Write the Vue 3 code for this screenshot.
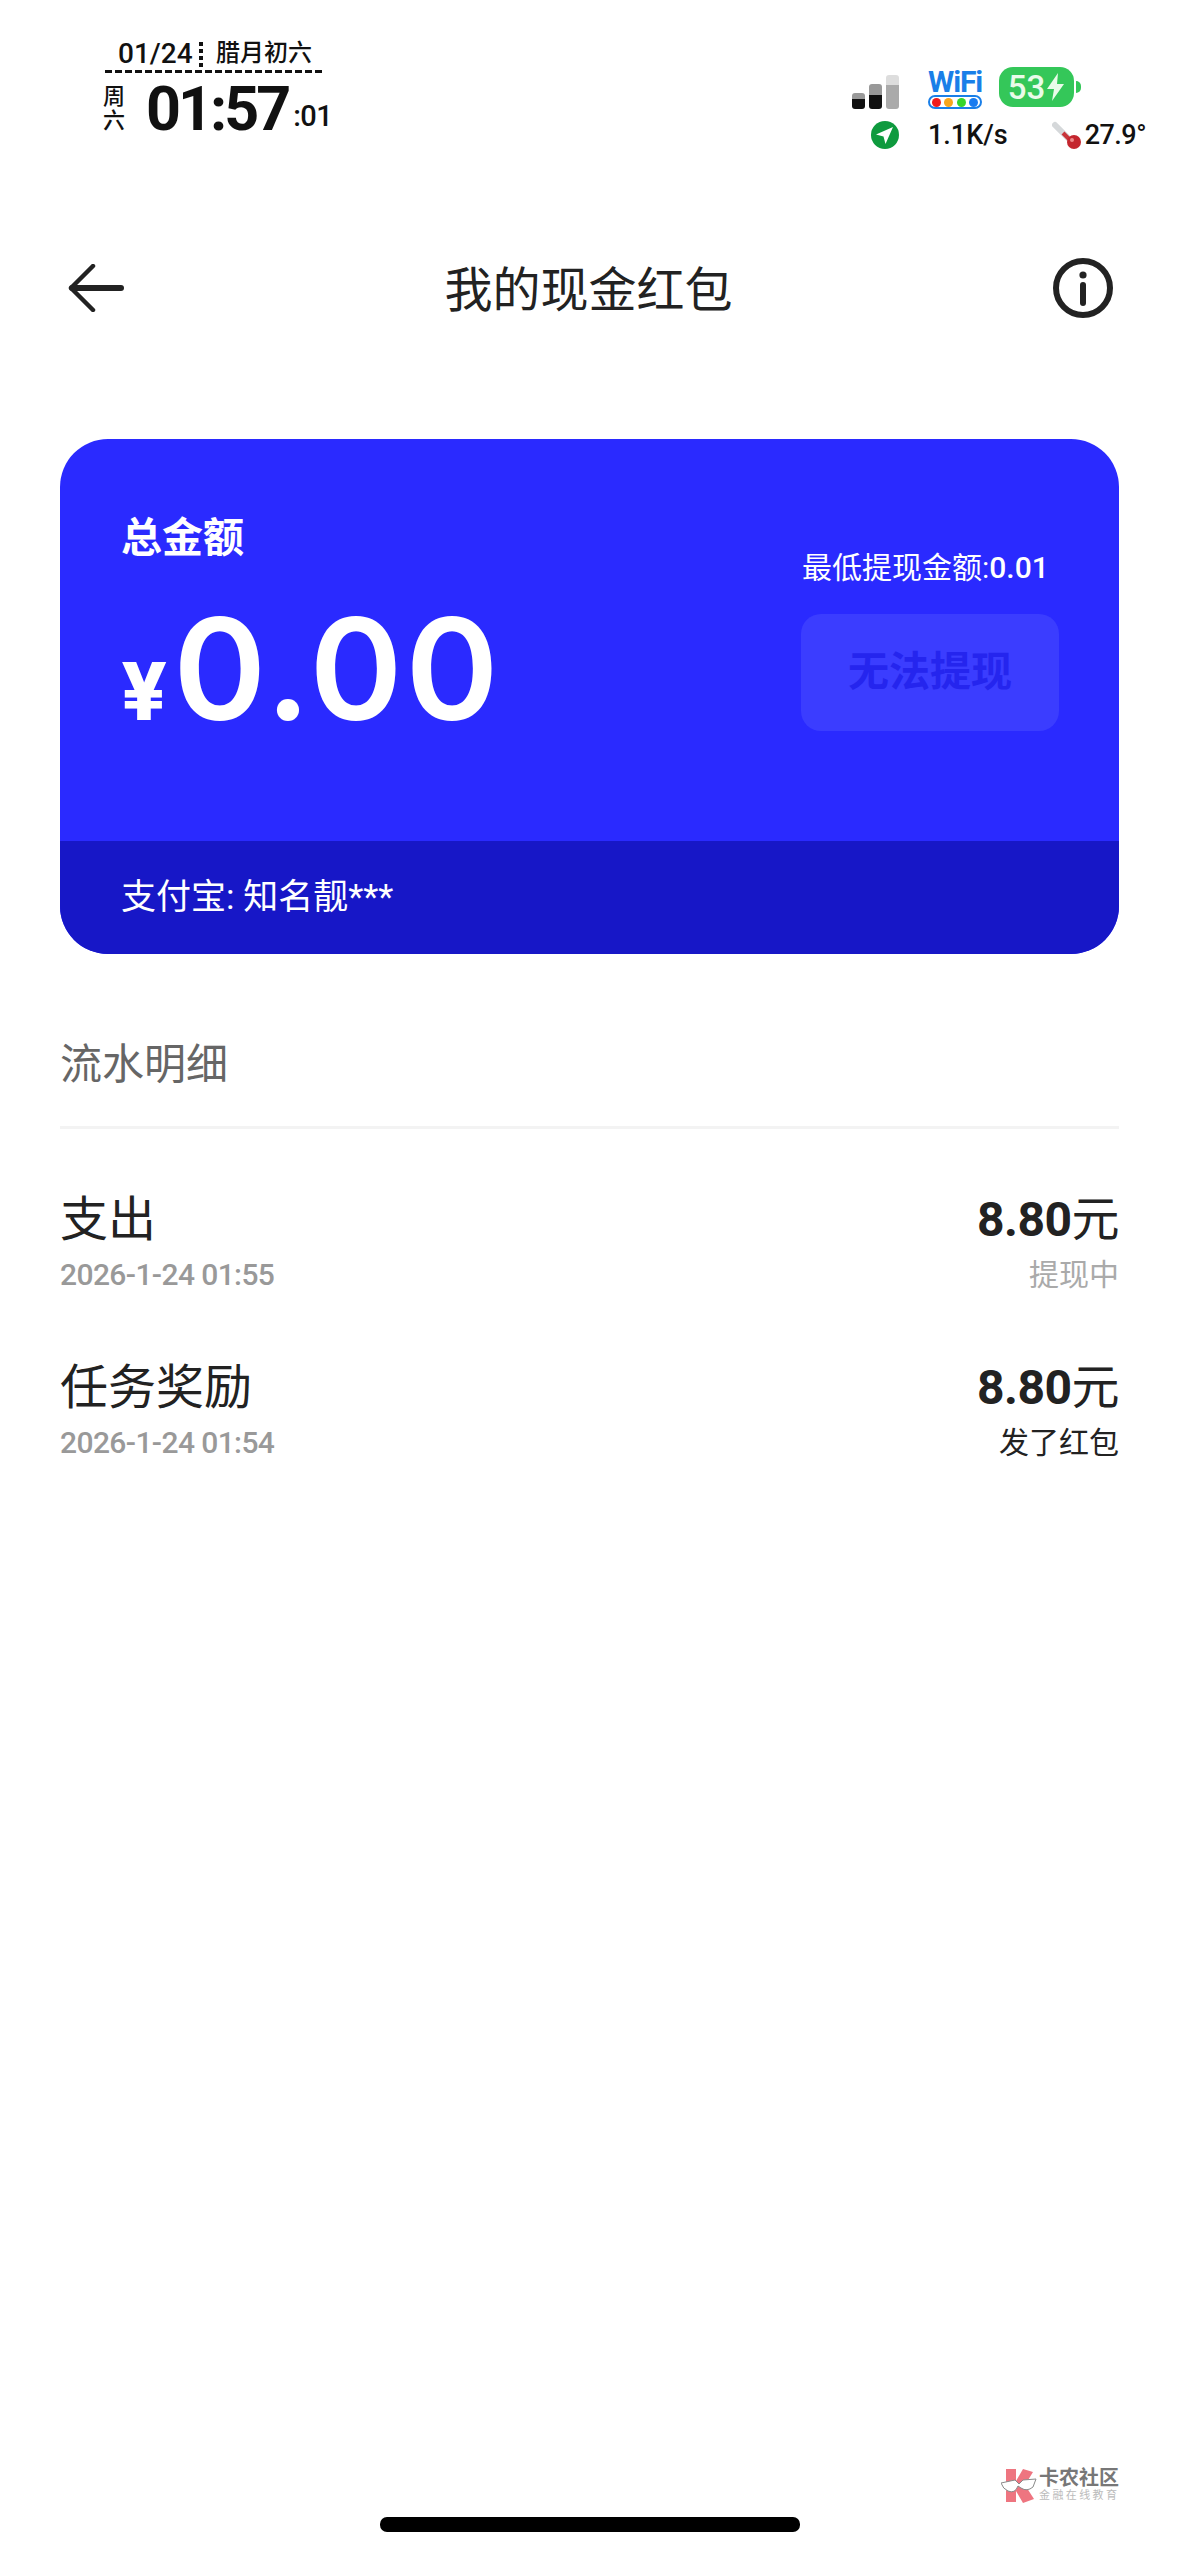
<template>
  <div class="page">
    <!-- Status bar -->
    <div class="status">
      <div class="clock">
        <div class="clock-top">
          <span class="clock-date">01/24</span>
          <span class="dots-v short"></span>
          <span class="clock-lunar">腊月初六</span>
        </div>
        <div class="clock-dash"></div>
        <div class="clock-main">
          <div class="clock-week"><span>周</span><span>六</span></div>
          <span class="dots-v tall"></span>
          <span class="clock-time">01:57</span>
          <span class="clock-sec">:01</span>
        </div>
      </div>

      <div class="indicators">
        <div class="ind-top">
          <div class="signal">
            <div class="bar b1"></div>
            <div class="bar b2"></div>
            <div class="bar b3"></div>
          </div>
          <div class="wifi">
            <span class="wifi-text">WiFi</span>
            <div class="wifi-pill">
              <i style="background: #f01c1c"></i>
              <i style="background: #f9a61c"></i>
              <i style="background: #35d52c"></i>
              <i style="background: #1a7cf0"></i>
            </div>
          </div>
          <div class="battery">
            <div class="battery-body">
              <span>53</span>
              <svg width="19" height="28" viewBox="0 0 19 28">
                <path d="M12 0 L1 16 H8 L6 28 L18 11 H11 Z" fill="#e9fbe9" />
              </svg>
            </div>
            <div class="battery-nub"></div>
          </div>
        </div>
        <div class="ind-bottom">
          <svg class="nav-icon" width="28" height="28" viewBox="0 0 28 28">
            <circle cx="14" cy="14" r="14" fill="#0e9a3e" />
            <path d="M22 6 L5 13.5 L12.5 15.5 L14.5 23 Z" fill="#fff" />
          </svg>
          <span class="speed">1.1K/s</span>
          <svg class="thermo" width="30" height="30" viewBox="0 0 30 30">
            <path d="M3 5 L17 19" stroke="#d5d8da" stroke-width="6" stroke-linecap="round" />
            <path d="M11 13 L19 21" stroke="#c8343a" stroke-width="4" />
            <circle cx="22" cy="22" r="7" fill="#c4262e" />
            <circle cx="20" cy="20" r="2" fill="#ee8a8a" />
          </svg>
          <span class="temp">27.9°</span>
        </div>
      </div>
    </div>

    <!-- Header -->
    <div class="nav">
      <svg width="56" height="48" viewBox="0 0 56 48" fill="none" stroke="#222" stroke-linecap="round" stroke-linejoin="round">
        <path d="M25 2 L3 24 L25 46" stroke-width="4.5" />
        <path d="M4 24 H53" stroke-width="6" />
      </svg>
      <span class="nav-title">我的现金红包</span>
      <svg width="60" height="60" viewBox="0 0 60 60" fill="none" stroke="#222">
        <circle cx="30" cy="30" r="27" stroke-width="6" />
        <circle cx="30" cy="17" r="3.6" fill="#222" stroke="none" />
        <path d="M30 27 V45" stroke-width="6" stroke-linecap="round" />
      </svg>
    </div>

    <!-- Balance card -->
    <div class="card">
      <div class="card-body">
        <div class="balance">
          <div class="balance-label">总金额</div>
          <div class="balance-amount">
            <span class="yen">¥</span><span class="amount">0.00</span>
          </div>
        </div>
        <div class="withdraw">
          <div class="withdraw-min">最低提现金额:<span>0.01</span></div>
          <div class="withdraw-btn">无法提现</div>
        </div>
      </div>
      <div class="card-foot">支付宝: 知名靓***</div>
    </div>

    <!-- Records -->
    <div class="section-title">流水明细</div>
    <div class="records">
      <div v-for="item in records" :key="item.time" class="record">
        <div class="record-left">
          <div class="record-name">{{ item.name }}</div>
          <div class="record-time">{{ item.time }}</div>
        </div>
        <div class="record-right">
          <div class="record-money">{{ item.money }}<span>元</span></div>
          <div class="record-state" :class="{ muted: item.muted }">{{ item.state }}</div>
        </div>
      </div>
    </div>

    <!-- Watermark -->
    <div class="watermark">
      <svg width="36" height="36" viewBox="0 0 36 36">
        <path d="M5 1 H15 V13 L22 1 L32 4 L24 17 L33 31 L22 35 L15 23 V34 H5 Z" fill="#ee7580" />
        <path d="M0 15 L14 12 L18 16 L22 12 L35 11 L32 19 Q26 24 20 20 L17 18 Q14 26 7 23 Q2 21 0 15 Z" fill="#fff" stroke="#8a8a8a" stroke-width="1" />
      </svg>
      <div class="wm-text">
        <div class="wm-main">卡农社区</div>
        <div class="wm-sub">金融在线教育</div>
      </div>
    </div>

    <div class="home-bar"></div>
  </div>
</template>

<script setup>
import { ref } from 'vue';

const records = ref([
  { name: '支出', time: '2026-1-24 01:55', money: '8.80', state: '提现中', muted: true },
  { name: '任务奖励', time: '2026-1-24 01:54', money: '8.80', state: '发了红包', muted: false },
]);
</script>

<style>
html,
body {
  margin: 0;
  background: #fff;
}
</style>

<style scoped>
.page {
  position: relative;
  width: 1179px;
  height: 2556px;
  overflow: hidden;
  background: #fff;
  color: #222;
  font-family: Roboto, "Noto Sans CJK SC", sans-serif;
}

/* status bar */
.status {
  display: flex;
  justify-content: space-between;
  height: 230px;
  box-sizing: border-box;
  padding: 38px 33px 0 103px;
  color: #111;
}

.clock {
  width: 222px;
}

.clock-top {
  display: flex;
  align-items: center;
  height: 32px;
  padding-left: 15px;
}

.clock-date {
  width: 81px;
  font-size: 28px;
  font-weight: 500;
  line-height: 32px;
}

.clock-lunar {
  margin-left: 13px;
  font-size: 24px;
  font-weight: 500;
  line-height: 30px;
  margin-bottom: 2px;
}

.dots-v {
  display: block;
  width: 4px;
  background: repeating-linear-gradient(to bottom, #111 0, #111 4px, transparent 4px, transparent 7px);
}

.dots-v.short {
  height: 25px;
}

.dots-v.tall {
  height: 49px;
  margin: 0 8px 0 13px;
}

.clock-dash {
  height: 3px;
  margin: 0 0 11px 2px;
  background: repeating-linear-gradient(to right, #111 0, #111 7px, transparent 7px, transparent 10px);
}

.clock-main {
  display: flex;
  align-items: center;
  height: 50px;
}

.clock-week {
  display: flex;
  flex-direction: column;
  width: 22px;
  font-size: 22px;
  line-height: 24px;
  font-weight: 500;
}

.clock-time {
  font-size: 61px;
  font-weight: 700;
  line-height: 50px;
  letter-spacing: -3px;
}

.clock-sec {
  align-self: flex-end;
  margin-left: 5px;
  font-size: 29px;
  font-weight: 500;
  line-height: 36px;
  letter-spacing: -0.5px;
}

.indicators {
  display: flex;
  flex-direction: column;
  width: 294px;
  padding-top: 29px;
}

.ind-top {
  display: flex;
  height: 42px;
  align-items: flex-end;
}

.signal {
  display: flex;
  align-items: flex-end;
  gap: 4px;
  width: 47px;
}

.bar {
  width: 13px;
  border-radius: 3px;
}

.b1 {
  height: 16px;
  background: linear-gradient(to bottom, #999 0, #999 6px, #111 6px);
}

.b2 {
  height: 25px;
  background: linear-gradient(to bottom, #999 0, #999 11px, #111 11px);
}

.b3 {
  height: 34px;
  background: linear-gradient(to bottom, #ddd 0, #ddd 10px, #aaa 10px);
}

.wifi {
  display: flex;
  flex-direction: column;
  width: 54px;
  margin-left: 29px;
}

.wifi-text {
  height: 26px;
  color: #1a7fe8;
  font-size: 30px;
  font-weight: 700;
  line-height: 26px;
  letter-spacing: -1.2px;
  text-align: center;
  white-space: nowrap;
}

.wifi-pill {
  display: flex;
  align-items: center;
  justify-content: space-between;
  box-sizing: border-box;
  height: 14px;
  padding: 0 2px;
  border: 2px solid #1a7fe8;
  border-radius: 7px;
}

.wifi-pill i {
  display: block;
  width: 9px;
  height: 9px;
  border-radius: 50%;
}

.battery {
  display: flex;
  align-items: center;
  margin-left: 17px;
  margin-bottom: 2px;
}

.battery-body {
  display: flex;
  align-items: center;
  justify-content: center;
  gap: 1px;
  width: 75px;
  height: 40px;
  border-radius: 14px;
  background: #34c759;
  color: #e9fbe9;
  font-size: 33px;
  font-weight: 500;
}

.battery-nub {
  width: 5px;
  height: 12px;
  margin-left: 2px;
  border-radius: 0 5px 5px 0;
  background: #34c759;
}

.ind-bottom {
  display: flex;
  align-items: center;
  height: 30px;
  margin-top: 11px;
  padding-left: 19px;
}

.speed {
  width: 129px;
  margin-left: 29px;
  font-size: 27px;
  font-weight: 500;
}

.temp {
  margin-left: 3px;
  font-size: 27px;
  font-weight: 500;
  letter-spacing: -0.5px;
}

.thermo {
  flex: none;
}

.nav-icon {
  flex: none;
}

/* header */
.nav {
  display: flex;
  align-items: center;
  justify-content: space-between;
  height: 116px;
  padding: 0 66px 0 68px;
}

.nav-title {
  margin-bottom: 4px;
  font-size: 48px;
  font-weight: 400;
  color: #222;
}

/* card */
.card {
  margin: 93px 60px 0;
  border-radius: 48px;
  overflow: hidden;
  background: #2a2aff;
  color: #fff;
}

.card-body {
  display: flex;
  justify-content: space-between;
  height: 402px;
  box-sizing: border-box;
  padding: 74px 60px 0 61px;
}

.balance-label {
  font-size: 41px;
  font-weight: 700;
  line-height: 50px;
}

.balance-amount {
  display: flex;
  align-items: baseline;
  margin-top: 46px;
  line-height: 120px;
  font-family: Inter, sans-serif;
}

.yen {
  font-size: 80px;
  font-weight: 800;
}

.amount {
  margin-left: 6px;
  font-size: 141px;
  font-weight: 600;
  letter-spacing: 3px;
}

.withdraw {
  display: flex;
  flex-direction: column;
  width: 258px;
  padding-top: 33px;
}

.withdraw-min {
  padding-left: 1px;
  font-size: 30px;
  line-height: 44px;
  white-space: nowrap;
}

.withdraw-min span {
  font-weight: 500;
}

.withdraw-btn {
  height: 117px;
  margin-top: 24px;
  border-radius: 20px;
  background: #3b3dff;
  color: #2525ee;
  font-size: 41px;
  font-weight: 700;
  line-height: 117px;
  text-align: center;
}

.card-foot {
  height: 113px;
  padding-left: 61px;
  background: #1717c7;
  font-size: 35px;
  line-height: 113px;
}

/* records */
.section-title {
  margin: 80px 60px 0;
  padding-bottom: 30px;
  border-bottom: 3px solid #f3f3f3;
  color: #666;
  font-size: 42px;
  line-height: 62px;
}

.records {
  display: flex;
  flex-direction: column;
  gap: 40px;
  margin: 56px 60px 0;
}

.record {
  display: flex;
  justify-content: space-between;
  height: 128px;
}

.record-name {
  font-size: 48px;
  line-height: 70px;
  color: #222;
}

.record-time {
  margin-top: -2px;
  font-size: 30px;
  font-weight: 500;
  line-height: 44px;
  letter-spacing: -0.6px;
  color: #999;
}

.record-right {
  text-align: right;
}

.record-money {
  font-size: 48px;
  font-weight: 700;
  line-height: 70px;
  letter-spacing: -0.5px;
  color: #222;
}

.record-money span {
  font-weight: 400;
}

.record-state {
  margin-top: -2px;
  font-size: 30px;
  line-height: 44px;
  color: #222;
}

.record-state.muted {
  color: #aaa;
}

/* overlays */
.watermark {
  position: absolute;
  left: 1001px;
  top: 2468px;
  display: flex;
  gap: 2px;
}

.wm-main {
  color: #777;
  font-size: 20px;
  font-weight: 700;
  line-height: 20px;
}

.wm-sub {
  margin-top: 1px;
  color: #bbb;
  font-size: 11px;
  letter-spacing: 2.4px;
  line-height: 14px;
}

.home-bar {
  position: absolute;
  left: 380px;
  top: 2517px;
  width: 420px;
  height: 15px;
  border-radius: 7px;
  background: #000;
}
</style>
